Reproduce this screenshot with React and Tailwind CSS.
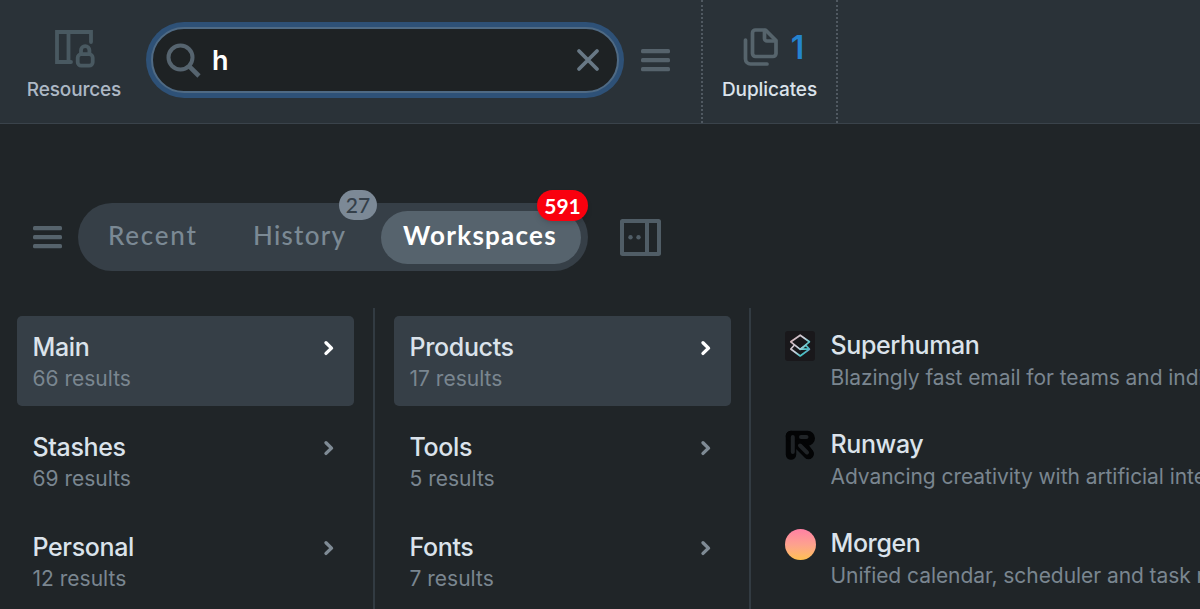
import React, { useState } from "react";

const workspaces = [
  { name: "Main", count: 66 },
  { name: "Stashes", count: 69 },
  { name: "Personal", count: 12 },
];

const collections = [
  { name: "Products", count: 17 },
  { name: "Tools", count: 5 },
  { name: "Fonts", count: 7 },
];

const SuperhumanLogo = () => (
  <svg className="size-[30px]" viewBox="0 0 30 30" fill="none">
    <defs>
      <linearGradient id="superhuman" x1="5" y1="9" x2="25" y2="23" gradientUnits="userSpaceOnUse">
        <stop offset="0" stopColor="#d6b3b8" />
        <stop offset="0.45" stopColor="#c9d2de" />
        <stop offset="0.75" stopColor="#43c3c6" />
        <stop offset="1" stopColor="#8b8bc0" />
      </linearGradient>
    </defs>
    <rect width="30" height="30" rx="3" fill="#19181b" />
    <g stroke="url(#superhuman)" strokeWidth="1.7" strokeLinejoin="round" strokeLinecap="round">
      <path d="M15.200 4.200 24.400 10.800 15.200 18.300 5.800 10.800Z" />
      <path d="M9 14.500 5.800 18 15.200 25 24.400 18.200 21 14.500M24 18.200H15.500L20.800 14.400" />
    </g>
  </svg>
);

const RunwayLogo = () => (
  <svg className="size-[30px]" viewBox="0 0 30 30" fill="none" strokeLinejoin="round" strokeLinecap="round">
    <g stroke="#030405" strokeWidth="10.500">
      <path d="M6 6V24.500" />
      <path d="M6 6H22.500a1 1 0 0 1 0 4.500H14L23.500 23.500" />
      <path d="M14 14.500 23.500 24" />
    </g>
    <g stroke="#202427" strokeWidth="4">
      <path d="M7.800 7V22" />
      <path d="M16 7H21.500" />
      <path d="M15 15.500 22 22.500" />
    </g>
  </svg>
);

const MorgenLogo = () => (
  <div className="size-[31px] rounded-full bg-linear-to-b from-[#ff80a4] via-[#fda18e] to-[#ffc04f]" />
);

const sites = [
  {
    name: "Superhuman",
    text: "Blazingly fast email for teams and individuals",
    Logo: SuperhumanLogo,
  },
  {
    name: "Runway",
    text: "Advancing creativity with artificial intelligence",
    Logo: RunwayLogo,
  },
  {
    name: "Morgen",
    text: "Unified calendar, scheduler and task manager",
    Logo: MorgenLogo,
  },
];

const MenuIcon = () => (
  <svg className="w-[29px] h-6 shrink-0" viewBox="0 0 29 24" fill="#56636c">
    <rect y="1" width="29" height="4.200" rx="1.500" />
    <rect y="10" width="29" height="4.200" rx="1.500" />
    <rect y="19" width="29" height="4.200" rx="1.500" />
  </svg>
);

const ResultColumn = ({ items }) => {
  const [selected, setSelected] = useState(0);

  return (
    <div className="w-[337px] pt-2 shrink-0 flex flex-col gap-[10px]">
      {items.map((item, i) => (
        <button
          key={item.name}
          onClick={() => setSelected(i)}
          className={`h-[90px] w-full rounded-[5px] pl-[15.500px] pr-5 pt-[15px] text-left flex justify-between items-start ${
            i === selected ? "bg-[#363f47]" : ""
          }`}
        >
          <div>
            <div className="text-[25px] leading-8 font-medium tracking-[-0.35px] text-[#dbe3eb]">
              {item.name}
            </div>
            <div className="text-[21px] leading-8 text-[#7a8690]">
              {item.count} results
            </div>
          </div>
          <svg
            className={`w-[11px] h-4 mt-[9px] ${
              i === selected ? "text-white" : "text-[#7f8b95]"
            }`}
            viewBox="0 0 11 16"
            fill="none"
            stroke="currentColor"
            strokeWidth="3.400"
            strokeLinecap="round"
            strokeLinejoin="round"
          >
            <path d="M3 2.800 8.500 8.100 3 13.400" />
          </svg>
        </button>
      ))}
    </div>
  );
};

const Header = () => {
  const [query, setQuery] = useState("h");

  return (
    <header className="h-[124px] flex items-start bg-[#2a3238] border-b border-[#3a434b]">
      <div className="w-[148px] pt-[29px] flex flex-col items-center shrink-0">
        <svg className="w-10 h-10 ml-[2px]" viewBox="0 0 40 40" fill="none" stroke="#495961" strokeWidth="3.800" strokeLinejoin="round" strokeLinecap="round">
          <path d="M16 33H2V3H36V13M13.500 3V33" strokeLinejoin="miter" />
          <rect x="22.700" y="25.200" width="15" height="11.500" rx="3.500" />
          <path d="M26 25v-3.700a4.200 4.200 0 0 1 8.400 0V25" />
        </svg>
        <div className="mt-[7px] text-[19px] leading-7 font-medium tracking-[-0.15px] text-[#adb8c5]">
          Resources
        </div>
      </div>
      <div className="w-[468px] h-[66px] mt-[27px] ml-[3px] pl-[13px] pr-[17px] flex items-center shrink-0 rounded-full bg-[#1e2224] border-2 border-[#4f6a84] ring-[5px] ring-[#2e5177]">
        <svg className="w-[35px] h-[35px] shrink-0" viewBox="0 0 35 35" fill="none" stroke="#56646f" strokeWidth="4">
          <circle cx="14.500" cy="14.500" r="12" />
          <path d="M22.800 22.800 33 33" strokeWidth="4.600" />
        </svg>
        <input
          value={query}
          onChange={(e) => setQuery(e.target.value)}
          className="flex-1 min-w-0 ml-[11px] pt-[2px] bg-transparent text-[27px] font-semibold text-white outline-none"
        />
        <button onClick={() => setQuery("")}>
          <svg className="w-6 h-6" viewBox="0 0 24 24" fill="none" stroke="#687885" strokeWidth="3.800" strokeLinecap="round">
            <path d="M3 3 21 21M21 3 3 21" />
          </svg>
        </button>
      </div>
      <div className="mt-12 ml-[22px]">
        <MenuIcon />
      </div>
      <div className="ml-[31px] w-[137px] h-full pt-[26px] flex flex-col items-center shrink-0 border-x-2 border-dotted border-[#505961]">
        <div className="flex items-center gap-3 ml-2">
          <svg className="w-[36px] h-10" viewBox="0 0 36 40" fill="none" stroke="#56646c" strokeWidth="3.700" strokeLinejoin="round" strokeLinecap="round">
            <path d="M22.500 3H12.500a3 3 0 0 0-3 3V26.500a3 3 0 0 0 3 3H30a3 3 0 0 0 3-3V13.500Z" />
            <path d="M21.500 3.500V11.500a2.500 2.500 0 0 0 2.500 2.500H32.500" />
            <path d="M2.500 13V32a5 5 0 0 0 5 5H24" />
          </svg>
          <span className="pt-[2px] text-[32px] leading-10 font-semibold text-[#2484cf]">1</span>
        </div>
        <div className="mt-2 text-[19px] leading-7 font-medium tracking-[-0.1px] text-[#dbe3eb]">
          Duplicates
        </div>
      </div>
    </header>
  );
};

const Tabs = () => (
  <div className="flex items-center pl-[33px] mt-[79px] h-[68px]">
    <MenuIcon />
    <nav className="ml-4 w-[510px] h-[68px] flex items-center rounded-full bg-[#363f47] font-['Lato',sans-serif] text-[26px] font-medium text-[#7b8994]">
      <button className="ml-[30px] pb-1 w-[88px] text-left tracking-[1.750px]">Recent</button>
      <button className="relative ml-[57px] pb-1 w-[92px] text-left tracking-[1.250px]">
        History
        <span className="absolute left-[86px] -top-[26px] w-[38px] h-[30px] rounded-full bg-[#7c8996] text-[#35404a] text-[21px] leading-[30px] tracking-normal text-center">
          27
        </span>
      </button>
      <button className="relative ml-[36px] w-[200px] h-[53px] pb-1 pr-[2px] rounded-full bg-[#56636d] font-bold tracking-[1.250px] text-white">
        Workspaces
        <span className="absolute left-[156px] -top-[21px] w-[51px] h-[31px] rounded-full bg-[#f9000e] text-[21px] leading-[31px] tracking-normal text-center shadow-md">
          591
        </span>
      </button>
    </nav>
    <svg className="w-[41px] h-[37px] ml-8" viewBox="0 0 41 37" fill="none" stroke="#505d66" strokeWidth="4">
      <rect x="2" y="2" width="37" height="33" rx="0.500" />
      <path d="M27 2V35" />
      <circle cx="10.500" cy="18.300" r="2.200" fill="#505d66" stroke="none" />
      <circle cx="18.500" cy="18.300" r="2.200" fill="#505d66" stroke="none" />
    </svg>
  </div>
);

const App = () => {
  return (
    <div className="w-[1200px] h-[609px] overflow-hidden bg-[#202528] font-['Inter',sans-serif]">
      <Header />
      <Tabs />
      <div className="flex mt-[37px] pl-[17px] h-[301px]">
        <ResultColumn items={workspaces} />
        <div className="w-[2px] mx-[19px] shrink-0 bg-[#323b42]" />
        <ResultColumn items={collections} />
        <div className="w-[2px] ml-[18px] mr-[34px] shrink-0 bg-[#323b42]" />
        <ul className="pt-[21px] flex-1 min-w-0">
          {sites.map(({ name, text, Logo }) => (
            <li key={name} className="flex h-[99px] gap-[15.500px]">
              <div className="w-[30px] pt-[2px] shrink-0">
                <Logo />
              </div>
              <div className="min-w-0 overflow-hidden">
                <div className="text-[25px] leading-8 font-medium tracking-[-0.4px] text-[#dbe3eb]">
                  {name}
                </div>
                <div className="text-[21px] leading-[34px] tracking-[-0.060px] whitespace-nowrap text-[#7a8690]">
                  {text}
                </div>
              </div>
            </li>
          ))}
        </ul>
      </div>
    </div>
  );
};

export default App;
